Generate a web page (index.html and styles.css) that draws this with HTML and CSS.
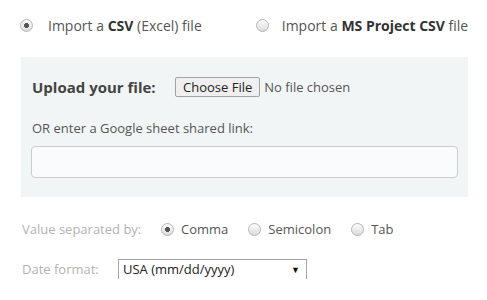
FILE: index.html
```html
<!DOCTYPE html>
<html lang="en">
<head>
<meta charset="UTF-8">
<title>Import tasks</title>
<link rel="stylesheet" href="styles.css">
</head>
<body>
<div class="import-form">
  <div class="source-row">
    <label class="opt"><input type="radio" name="source" checked> <span>Import a <b>CSV</b> (Excel) file</span></label>
    <label class="opt"><input type="radio" name="source"> <span>Import a <b>MS Project CSV</b> file</span></label>
  </div>

  <div class="upload-box">
    <div class="upload-row">
      <span class="upload-label">Upload your file:</span>
      <input type="file" class="file-input">
    </div>
    <p class="link-label">OR enter a Google sheet shared link:</p>
    <input type="text" class="link-input">
  </div>

  <div class="field-row">
    <span class="field-label sep-label">Value separated by:</span>
    <label class="small-opt"><input type="radio" name="sep" checked> <span>Comma</span></label>
    <label class="small-opt"><input type="radio" name="sep"> <span>Semicolon</span></label>
    <label class="small-opt"><input type="radio" name="sep"> <span>Tab</span></label>
  </div>

  <div class="field-row date-row">
    <span class="field-label date-label">Date format:</span>
    <span class="select-wrap">
      <select class="date-select">
        <option>USA (mm/dd/yyyy)</option>
        <option>Europe (dd/mm/yyyy)</option>
        <option>ISO (yyyy-mm-dd)</option>
      </select>
    </span>
  </div>
</div>
</body>
</html>
```

FILE: styles.css
```css
body { margin: 0; font-family: 'Open Sans', sans-serif; color: #555; background: #fff; }
.import-form { padding: 14px 19px 0 21px; }

input[type='radio'] { appearance: none; -webkit-appearance: none; width: 13px; height: 13px; margin: 0; border-radius: 50%; border: 1px solid #b5b5b5; background: linear-gradient(#fcfcfc, #dcdcdc); box-sizing: border-box; flex-shrink: 0; }
input[type='radio']:checked { background: radial-gradient(circle, #555 0, #555 2.2px, transparent 2.8px), linear-gradient(#fcfcfc, #dcdcdc); }

.source-row { display: flex; height: 22px; align-items: center; margin-bottom: 21px; white-space: nowrap; }
.opt { display: flex; align-items: center; gap: 15px; font-size: 14px; margin-left: -1px; }
.opt + .opt { margin-left: 54px; gap: 13px; }
.opt b { color: #333; font-weight: 700; }

.upload-box { background: #f2f5f6; padding: 18px 10px 19px 10px; }
.upload-row { display: flex; align-items: center; height: 24px; padding-left: 1px; }
.upload-label { font-size: 15px; font-weight: 700; color: #444; width: 143px; }
.file-input { font-family: 'Open Sans', sans-serif; font-size: 13px; color: #555; }
.file-input::file-selector-button { font-family: 'Open Sans', sans-serif; font-size: 13px; color: #222; background: #efefef; border: 1px solid #a3a3a3; border-radius: 2px; padding: 0 7px; height: 20px; margin-right: 4px; }
.link-label { font-size: 13px; margin: 20px 0 9px 1px; line-height: 18px; }
.link-input { display: block; width: 100%; height: 32px; box-sizing: border-box; border: 1px solid #ccc; border-radius: 4px; background: #f9fbfd; }

.field-row { display: flex; align-items: center; font-size: 13px; height: 20px; margin-top: 22px; padding-left: 1px; white-space: nowrap; }
.date-row { margin-top: 20px; }
.field-label { color: #b3b3b3; }
.sep-label { width: 139px; }
.date-label { width: 96px; }
.small-opt { display: flex; align-items: center; gap: 7px; margin-right: 20px; }

.select-wrap { position: relative; display: inline-block; height: 21px; }
.select-wrap::after { content: '\25BC'; position: absolute; right: 7px; top: 4px; font-size: 9px; color: #111; pointer-events: none; }
.date-select { appearance: none; -webkit-appearance: none; width: 189px; height: 21px; border: 1px solid #a6a6a6; border-radius: 0; background: #fff; font-family: 'Open Sans', sans-serif; font-size: 13px; color: #222; padding: 0 4px; }
```
